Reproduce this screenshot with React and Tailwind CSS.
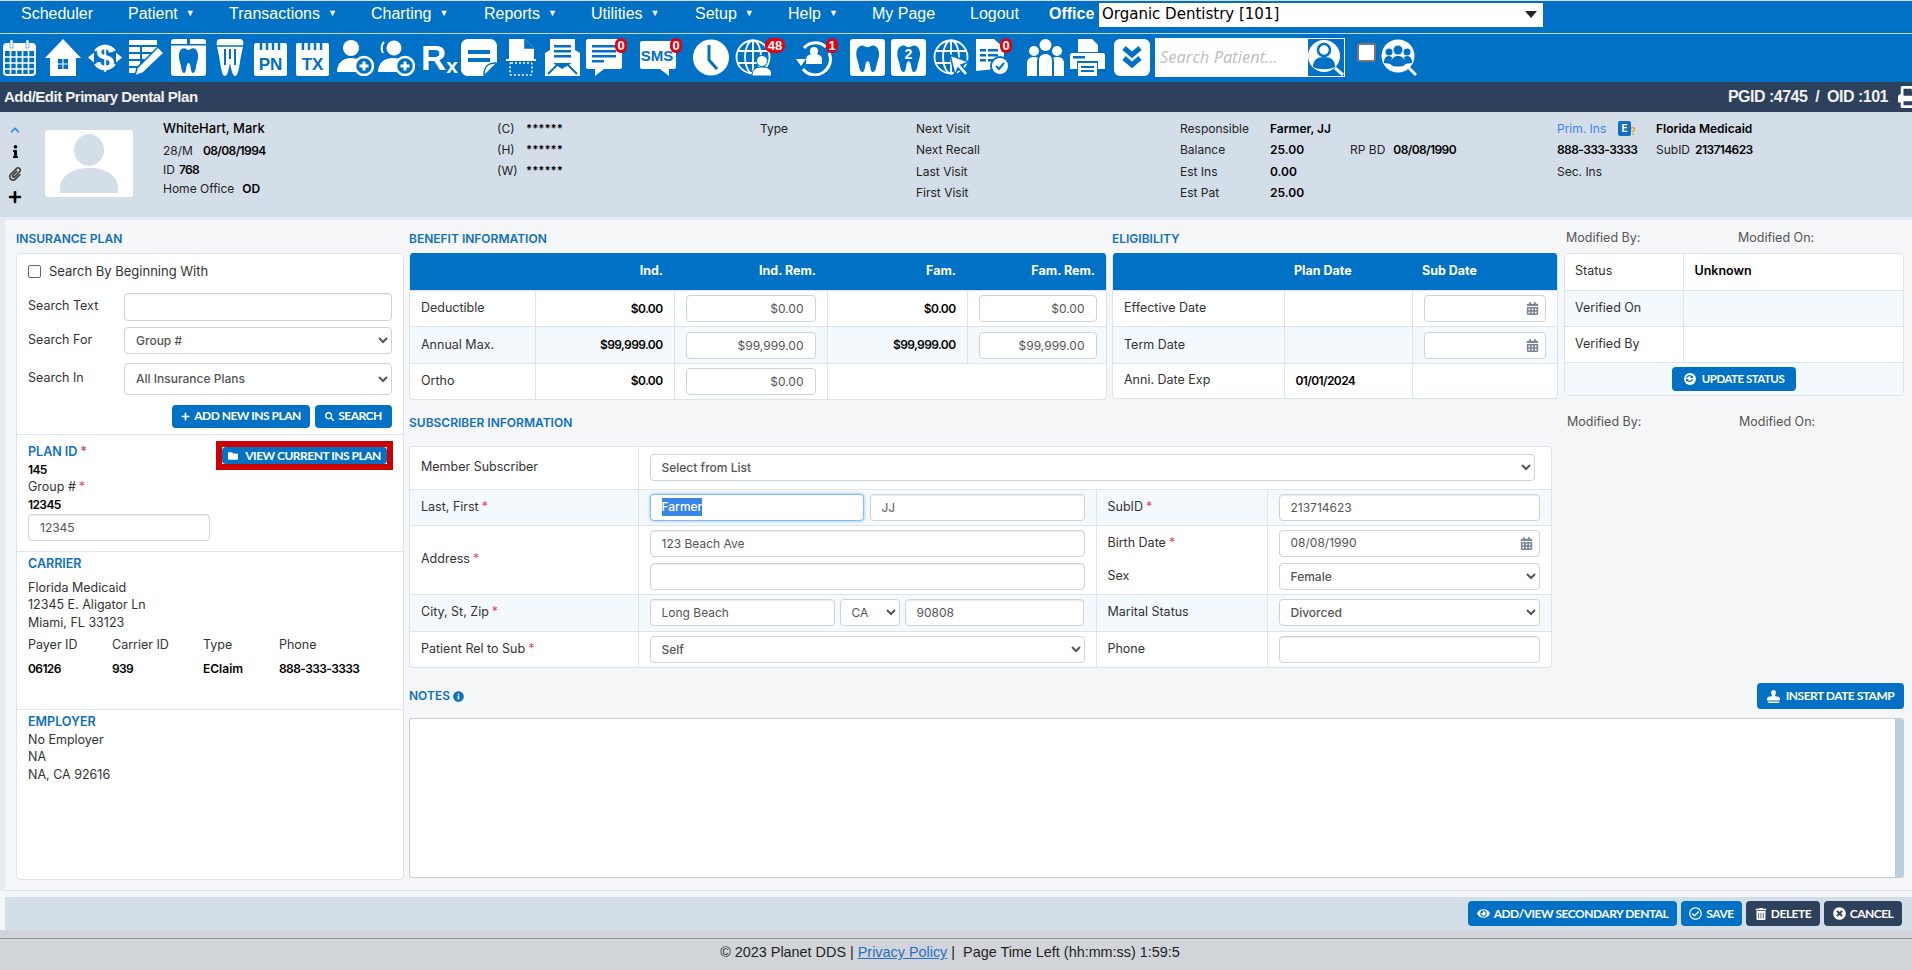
import { FaCalendarAlt, FaChevronUp, FaEye, FaFolder, FaInfo, FaInfoCircle, FaPaperclip, FaPlus, FaRegCheckCircle, FaSearch, FaStamp, FaSyncAlt, FaTimesCircle, FaTrashAlt, FaPrint } from 'react-icons/fa';

const BLUE = '#0071c5';
const toothPath = 'M11 4C6 4 3 8 3 14c0 4 2 7 3 11 1 5 2 9 5 9s3-4 4-8c.5-2 1.500-4 3-4s2.500 2 3 4c1 4 1 8 4 8s4-4 5-9c1-4 3-7 3-11 0-6-3-10-8-10-3 0-4 2-7 2s-4-2-7-2z';

const inputCls = 'h-[27px] w-full rounded-[4px] border border-[#ced2d7] bg-white px-[11px] text-[12px] text-[#555] shadow-[inset_0_1px_1px_rgba(0,0,0,0.08)] outline-none';
const selectCls = 'h-[27px] w-full rounded-[4px] border border-[#ced2d7] bg-white pl-[7px] text-[12px] font-medium text-[#555] outline-none';
const btnCls = 'flex items-center justify-center gap-[4px] rounded-[4px] bg-[#0071c5] font-["Lato"] text-[12px] font-bold uppercase tracking-[-0.5px] text-white';
const heading = 'text-[12px] font-semibold uppercase text-[#0f6fc0]';
const num = 'text-[12px] font-semibold tracking-[-0.6px] text-black';
const td = 'border-l border-t border-[#dde3ea] px-[11px] first:border-l-0';

function Req() {
  return <span className="ml-[3px] align-top text-[#e2445c]">*</span>;
}

function Badge({ n, cls }) {
  return (
    <span className={`absolute top-[-1px] flex h-[15px] items-center justify-center rounded-[7px] bg-[#e3000f] px-[2px] font-["Liberation_Sans"] text-[13px] font-bold leading-none text-white ${cls}`}>
      {n}
    </span>
  );
}

function Svg({ w = 36, cls = '', children }) {
  return (
    <svg viewBox={`0 0 ${w} 37`} width={w} height={37} className={`shrink-0 ${cls}`}>
      {children}
    </svg>
  );
}

function GlobeLines() {
  return (
    <g fill="none" stroke="#fff" strokeWidth="1.800">
      <circle cx="18" cy="18" r="16.500" />
      <ellipse cx="18" cy="18" rx="8" ry="16.500" />
      <path d="M18 1.500v33M2 12h32M2 24h32" />
    </g>
  );
}

function Toolbar() {
  return (
    <div className="flex h-[48px] shrink-0 items-center bg-[#0071c5] pb-[2px] pl-[3px]">
      {/* calendar */}
      <Svg w={33}>
        <rect x="1" y="5" width="31" height="31" rx="3" fill="none" stroke="#fff" strokeWidth="2" />
        <rect x="1" y="5" width="31" height="7" fill="#fff" />
        <rect x="7" y="1" width="3" height="8" fill="#fff" stroke={BLUE} strokeWidth=".5" />
        <rect x="23" y="1" width="3" height="8" fill="#fff" stroke={BLUE} strokeWidth=".5" />
        <path d="M1 18h31M1 24h31M1 30h31M7.500 12v24M13.500 12v24M19.500 12v24M25.500 12v24" stroke="#fff" strokeWidth="1.600" />
      </Svg>
      {/* home */}
      <Svg cls="ml-[9px]">
        <path d="M18 0l18 19h-5v18H5V19H0z" fill="#fff" />
        <path d="M13 20h4.500v4.500H13zM18.500 20H23v4.500h-4.500zM13 25.500h4.500V30H13zM18.500 25.500H23V30h-4.500z" fill={BLUE} />
      </Svg>
      {/* dollar */}
      <Svg w={34} cls="ml-[7px]">
        <path d="M7 12A12 12 0 0 1 27 12M7 25A12 12 0 0 0 27 25" fill="none" stroke="#fff" strokeWidth="2" />
        <path d="M0 18.500l6-5v10zM34 18.500l-6-5v10z" fill="#fff" />
        <text x="17" y="30" textAnchor="middle" fontFamily="Liberation Sans" fontSize="33" fontWeight="700" fill="#fff">$</text>
      </Svg>
      {/* chart edit */}
      <Svg cls="ml-[7px]" w={35}>
        <path d="M0 1h28v5H0zM0 8h11v5H0zM13 8h15v5H13zM0 15h11v5H0zM13 15h8v5h-8zM0 22h11v5H0zM0 29h7v5H0z" fill="#fff" />
        <path d="M29 8l6 6-21 20-8 3 2-8z" fill="#fff" stroke={BLUE} strokeWidth="1.500" />
      </Svg>
      {/* tooth chart */}
      <Svg w={35} cls="ml-[7px]">
        <rect width="35" height="37" rx="3" fill="#fff" />
        <rect x="0" y="5" width="35" height="1.500" fill={BLUE} />
        <rect x="16" y="0" width="3" height="6" fill={BLUE} />
        <g transform="translate(6 6) scale(.64 .82)"><path d={toothPath} fill={BLUE} /></g>
      </Svg>
      {/* bridge */}
      <Svg w={28} cls="ml-[10px]">
        <path d="M4 0h20c3 0 4 3 3 8-1 4-2 8-3 15-1 6-2 14-5 14-2 0-3-4-4-8l-1-5-1 5c-1 4-2 8-4 8-3 0-4-8-5-14C3 16 2 12 1 8 0 3 1 0 4 0z" fill="#fff" />
        <path d="M0 7h28" stroke={BLUE} strokeWidth="1.500" />
        <path d="M9 10v16M14 10v10M19 10v16" stroke={BLUE} strokeWidth="2" />
      </Svg>
      {/* PN */}
      <Svg w={33} cls="ml-[10px]">
        <rect y="4" width="33" height="33" rx="2" fill="#fff" />
        <path d="M7 2v9M13 2v9M19 2v9M25 2v9" stroke={BLUE} strokeWidth="2.500" />
        <text x="16.500" y="31" textAnchor="middle" fontFamily="Liberation Sans" fontSize="17" fontWeight="700" fill={BLUE}>PN</text>
      </Svg>
      {/* TX */}
      <Svg w={33} cls="ml-[9px]">
        <rect y="4" width="33" height="33" rx="2" fill="#fff" />
        <path d="M7 2v9M13 2v9M19 2v9M25 2v9" stroke={BLUE} strokeWidth="2.500" />
        <text x="16.500" y="31" textAnchor="middle" fontFamily="Liberation Sans" fontSize="17" fontWeight="700" fill={BLUE}>TX</text>
      </Svg>
      {/* add patient */}
      <Svg w={37} cls="ml-[8px]">
        <circle cx="14" cy="9" r="8" fill="#fff" />
        <path d="M0 33c0-9 6-14 14-14s12 4 13 7l-8 7z" fill="#fff" />
        <circle cx="27" cy="27" r="9" fill={BLUE} stroke="#fff" strokeWidth="2.500" />
        <path d="M22.500 27h9M27 22.500v9" stroke="#fff" strokeWidth="3" />
      </Svg>
      <Svg w={37} cls="ml-[4px]">
        <circle cx="16" cy="9" r="7.500" fill="#fff" />
        <path d="M6 3C3 6 3 11 5 14" fill="none" stroke="#fff" strokeWidth="2" />
        <path d="M0 33c0-9 6-14 15-14s12 4 13 7l-8 7z" fill="#fff" />
        <circle cx="27" cy="27" r="9" fill={BLUE} stroke="#fff" strokeWidth="2.500" />
        <path d="M22.500 27h9M27 22.500v9" stroke="#fff" strokeWidth="3" />
      </Svg>
      {/* Rx */}
      <div className="ml-[6px] flex h-[37px] w-[36px] shrink-0 items-end font-['Liberation_Sans'] font-bold text-white">
        <span className="text-[35px] leading-[37px]">R</span>
        <span className="text-[21px] leading-[20px]">x</span>
      </div>
      {/* note */}
      <Svg cls="ml-[4px]">
        <path d="M7 0h22c4 0 7 3 7 7v16L22 37H7c-4 0-7-3-7-7V7c0-4 3-7 7-7z" fill="#fff" />
        <path d="M7 11h22v4H7zM7 19h22v4H7z" fill={BLUE} />
        <path d="M23 36c0-8 3-12 12-12" fill="none" stroke={BLUE} strokeWidth="1.500" />
      </Svg>
      {/* scan */}
      <Svg w={30} cls="ml-[9px]">
        <path d="M3 0h16l9 9v11H3z" fill="#fff" />
        <path d="M19 0v9h9" fill={BLUE} stroke={BLUE} strokeWidth="1.500" />
        <path d="M0 21h30" stroke="#fff" strokeWidth="2" />
        <rect x="4" y="24" width="22" height="12" rx="1" fill="none" stroke="#fff" strokeWidth="1.500" strokeDasharray="2 2" />
      </Svg>
      {/* mail */}
      <Svg w={35} cls="ml-[9px]">
        <rect x="5" y="0" width="25" height="24" fill="#fff" />
        <path d="M9 6h17v2.500H9zM9 11h17v2.500H9zM9 16h17v2.500H9z" fill={BLUE} />
        <path d="M0 14l5-3v11l12 8 13-8V11l5 3v23H0z" fill="#fff" />
        <path d="M3 35l10-10M32 35L22 25" stroke={BLUE} strokeWidth="2" />
      </Svg>
      {/* chat */}
      <div className="relative ml-[6px] shrink-0">
        <Svg>
          <path d="M2 0h32c1 0 2 1 2 2v26c0 1-1 2-2 2H18l-9 7v-7H2c-1 0-2-1-2-2V2C0 1 1 0 2 0z" fill="#fff" />
          <path d="M6 6h24v2.500H6zM6 11h24v2.500H6zM6 16h24v2.500H6zM6 21h12v2.500H6z" fill={BLUE} />
        </Svg>
        <Badge n="0" cls="right-[-5px] w-[12px]" />
      </div>
      {/* sms */}
      <div className="relative ml-[18px] shrink-0">
        <Svg>
          <path d="M2 2h32c1 0 2 1 2 2v24c0 1-1 2-2 2h-5v7l-9-7H2c-1 0-2-1-2-2V4c0-1 1-2 2-2z" fill="#fff" />
          <text x="17" y="22" textAnchor="middle" fontFamily="Liberation Sans" fontSize="15" fontWeight="700" fill={BLUE}>SMS</text>
        </Svg>
        <Badge n="0" cls="right-[-6px] w-[12px]" />
      </div>
      {/* clock */}
      <Svg cls="ml-[17px]">
        <circle cx="18" cy="18.500" r="18" fill="#fff" />
        <path d="M16 6v15l8 9" fill="none" stroke={BLUE} strokeWidth="3" />
      </Svg>
      {/* globe user */}
      <div className="relative ml-[6px] shrink-0">
        <Svg>
          <GlobeLines />
          <circle cx="27" cy="22" r="5.500" fill="#fff" stroke={BLUE} />
          <path d="M17 37c0-7 4-9 10-9s10 2 10 9z" fill="#fff" stroke={BLUE} />
        </Svg>
        <Badge n="48" cls="right-[-14px] w-[20px]" />
      </div>
      {/* refresh user */}
      <div className="relative ml-[25px] shrink-0">
        <Svg w={37}>
          <path d="M8 9A15 15 0 0 1 30 8M33 14a15 15 0 0 1-4 18 15 15 0 0 1-22-2" fill="none" stroke="#fff" strokeWidth="3" />
          <path d="M0 20h10l-5 7z" fill="#fff" />
          <circle cx="18" cy="12" r="4" fill="#fff" />
          <path d="M10 25v-5c0-3 3-5 8-5s8 2 8 5v5z" fill="#fff" />
        </Svg>
        <Badge n="1" cls="right-[-5px] w-[12px]" />
      </div>
      {/* tooth */}
      <Svg w={35} cls="ml-[17px]">
        <rect width="35" height="37" rx="3" fill="#fff" />
        <g transform="translate(4 3) scale(.76 .88)"><path d={toothPath} fill={BLUE} /></g>
      </Svg>
      <Svg w={35} cls="ml-[6px]">
        <rect width="35" height="37" rx="3" fill="#fff" />
        <g transform="translate(4 3) scale(.76 .88)"><path d={toothPath} fill={BLUE} /></g>
        <text x="17.500" y="20" textAnchor="middle" fontFamily="Liberation Sans" fontSize="14" fontWeight="700" fill="#fff">2</text>
      </Svg>
      {/* globe cursor */}
      <Svg cls="ml-[7px]">
        <GlobeLines />
        <path d="M17 16l19 7-8 3 7 8-3 3-7-8-3 7z" fill="#fff" stroke={BLUE} strokeWidth="1.500" />
      </Svg>
      {/* doc check */}
      <div className="relative ml-[5px] shrink-0">
        <Svg>
          <path d="M2 0h18l10 9v20L2 32z" fill="#fff" />
          <path d="M6 10h6v2.500H6zM14 10h10v2.500H14zM6 15h6v2.500H6zM14 15h10v2.500H14zM6 20h6v2.500H6zM14 20h5v2.500h-5z" fill={BLUE} />
          <circle cx="26" cy="27" r="9" fill="#fff" stroke={BLUE} strokeWidth="2" />
          <path d="M22 27l3 3 5-6" fill="none" stroke={BLUE} strokeWidth="2" />
        </Svg>
        <Badge n="0" cls="right-[-2px] w-[12px]" />
      </div>
      {/* people */}
      <Svg w={37} cls="ml-[17px]">
        <circle cx="7" cy="12" r="5" fill="#fff" />
        <circle cx="30" cy="12" r="5" fill="#fff" />
        <circle cx="18.500" cy="6" r="6" fill="#fff" />
        <path d="M0 37V24c0-4 3-6 7-6 2 0 3 .5 4 1-1 1-1 3-1 5v13zM37 37V24c0-4-3-6-7-6-2 0-3 .5-4 1 1 1 1 3 1 5v13zM12 37V22c0-5 3-7 6.500-7s6.500 2 6.500 7v15z" fill="#fff" />
      </Svg>
      {/* printer */}
      <Svg w={35} cls="ml-[6px]">
        <path d="M8 0h14l6 6v7H8z" fill="#fff" />
        <path d="M0 16c0-1 1-2 2-2h31c1 0 2 1 2 2v14h-7v-8H7v8H0z" fill="#fff" />
        <rect x="3" y="17" width="12" height="2.500" fill={BLUE} />
        <rect x="8" y="24" width="19" height="13" fill="#fff" />
        <path d="M11 28h13M11 32h13" stroke={BLUE} strokeWidth="2" />
      </Svg>
      {/* chevrons */}
      <Svg cls="ml-[9px]">
        <rect width="36" height="37" rx="6" fill="#fff" />
        <path d="M10 9l8 7 8-7M10 19l8 7 8-7" fill="none" stroke={BLUE} strokeWidth="5" />
      </Svg>
      {/* search */}
      <div className="ml-[5px] flex h-[39px] w-[190px] shrink-0 items-center justify-between bg-white pl-[5px]">
        <span className="font-['Open_Sans'] text-[16.500px] italic text-[#bdbdbd]">Search Patient...</span>
        <div className="mr-[1px] h-[37px] w-[36px] bg-[#0071c5]">
          <svg viewBox="0 0 36 37" width={36} height={37}>
            <circle cx="16" cy="17" r="16" fill="#fff" />
            <circle cx="16" cy="11" r="6" fill="none" stroke={BLUE} strokeWidth="2.500" />
            <path d="M5 28c0-7 4-10 11-10s11 3 11 10c-6 3-16 3-22 0z" fill={BLUE} />
            <path d="M27 29l8 7" stroke="#fff" strokeWidth="3" />
          </svg>
        </div>
      </div>
      <span className="ml-[12px] mb-[10px] h-[19px] w-[19px] shrink-0 rounded-[3px] border-2 border-[#777] bg-white" />
      <Svg cls="ml-[5px]">
        <circle cx="17" cy="17" r="16.500" fill="#fff" />
        <circle cx="8" cy="13" r="3.500" fill={BLUE} />
        <circle cx="26" cy="13" r="3.500" fill={BLUE} />
        <circle cx="17" cy="11" r="4.500" fill={BLUE} />
        <path d="M3 24c0-5 2-7 5-7l3 1-1 7zM31 24c0-5-2-7-5-7l-3 1 1 7zM10 26c0-7 3-9 7-9s7 2 7 9c-4 2-10 2-14 0z" fill={BLUE} />
        <path d="M28 29l7 7" stroke="#fff" strokeWidth="3" />
      </Svg>
    </div>
  );
}

function Nav() {
  const items = [
    ['Scheduler', 'w-[107px]', false],
    ['Patient', 'w-[101px]', true],
    ['Transactions', 'w-[142px]', true],
    ['Charting', 'w-[113px]', true],
    ['Reports', 'w-[107px]', true],
    ['Utilities', 'w-[104px]', true],
    ['Setup', 'w-[93px]', true],
    ['Help', 'w-[84px]', true],
    ['My Page', 'w-[98px]', false],
    ['Logout', 'w-[79px]', false],
  ];
  return (
    <div className="flex h-[34px] shrink-0 items-center border-y border-t-[#d5dbe2] border-b-[#c8d6e5] bg-[#0071c5] pl-[21px] font-['Liberation_Sans'] text-[16px] text-white">
      {items.map(([label, w, caret]) => (
        <div key={label} className={`${w} flex shrink-0 items-center pb-[7px]`}>
          {label}
          {caret && <span className="ml-[8px] text-[9px]">▼</span>}
        </div>
      ))}
      <div className="w-[50px] shrink-0 pb-[7px] font-bold">Office</div>
      <div className="mb-[5px] flex h-[24px] w-[444px] items-center justify-between bg-white pl-[3px] pr-[5px] font-['DejaVu_Sans'] text-[15px] text-black">
        Organic Dentistry [101]
        <span className="mr-[1px] h-0 w-0 border-x-[6px] border-t-[7px] border-x-transparent border-t-[#222]" />
      </div>
    </div>
  );
}

function Row({ label, value, v2, w = 'w-[90px]', tall }) {
  return (
    <div className={`flex h-[21px] items-center ${tall ? 'mt-[1px]' : ''}`}>
      <span className={w}>{label}</span>
      {value && <span className="font-semibold text-black">{value}</span>}
      {v2}
    </div>
  );
}

function PatientBar() {
  return (
    <div className="flex h-[105px] shrink-0 bg-[#d4dee9] pt-[6px] text-[12px] text-[#222]">
      <div className="flex w-[45px] flex-col items-center gap-[7px] pr-[15px] pt-[7px] text-[14px] leading-none">
        <FaChevronUp className="text-[10px] text-[#3b82f6]" />
        <FaInfo className="mt-[3px] text-[13px] text-black" />
        <FaPaperclip className="mt-[2px] text-[#444]" />
        <FaPlus className="mt-[2px] text-[14px] text-black" />
      </div>
      <div className="mt-[12px] h-[67px] w-[88px] shrink-0 overflow-hidden rounded-[3px] bg-white">
        <svg viewBox="0 0 88 67" width={88} height={67}>
          <ellipse cx="44" cy="20" rx="15" ry="16" fill="#d4dee9" />
          <path d="M15 63V58c0-12 12-20 29-20s29 8 29 20v5z" fill="#d4dee9" />
        </svg>
      </div>
      <div className="ml-[30px] w-[334px] shrink-0">
        <div className="flex h-[21px] items-center text-[13px] font-medium text-black">WhiteHart, Mark</div>
        <div className="flex h-[23px] items-center">28/M<span className={`ml-[10px] ${num}`}>08/08/1994</span></div>
        <div className="flex h-[15px] items-center">ID<span className={`ml-[4px] ${num}`}>768</span></div>
        <div className="mt-[1px] flex h-[21px] items-center">Home Office<span className="ml-[8px] font-semibold text-black">OD</span></div>
      </div>
      <div className="w-[263px] shrink-0">
        {['(C)', '(H)', '(W)'].map((l) => (
          <div key={l} className="flex h-[21px] items-center">
            <span className="w-[29px]">{l}</span>
            <span className="text-[11px] font-bold text-black">******</span>
          </div>
        ))}
      </div>
      <div className="flex h-[21px] w-[156px] shrink-0 items-center">Type</div>
      <div className="w-[264px] shrink-0">
        <Row label="Next Visit" />
        <Row label="Next Recall" />
        <Row label="Last Visit" tall />
        <Row label="First Visit" />
      </div>
      <div className="w-[377px] shrink-0">
        <Row label="Responsible" value="Farmer, JJ" />
        <Row label="Balance" value="25.00" v2={<span className="ml-[46px]">RP BD<span className={`ml-[8px] ${num}`}>08/08/1990</span></span>} />
        <Row label="Est Ins" value="0.00" tall />
        <Row label="Est Pat" value="25.00" />
      </div>
      <div className="shrink-0">
        <div className="flex h-[21px] items-center">
          <span className="w-[61px] text-[#3b82f6]">Prim. Ins</span>
          <span className="relative flex h-[15px] w-[13px] items-center justify-center rounded-[2px] bg-[#0f6fc0] text-[10px] font-bold text-white">
            E<span className="absolute bottom-[-3px] right-[-5px] text-[10px] font-bold text-[#f59e0b]">?</span>
          </span>
          <span className="ml-[25px] font-semibold text-black">Florida Medicaid</span>
        </div>
        <div className="flex h-[22px] items-center">
          <span className={`w-[99px] ${num}`}>888-333-3333</span>
          SubID<span className={`ml-[5px] ${num}`}>213714623</span>
        </div>
        <div className="flex h-[21px] items-center">Sec. Ins</div>
      </div>
    </div>
  );
}

function InsurancePlan() {
  return (
    <div className="flex h-[659px] w-[388px] shrink-0 flex-col">
      <div className={`flex h-[32px] items-center pt-[4px] ${heading}`}>Insurance Plan</div>
      <div className="flex h-[627px] flex-col rounded-[4px] border border-[#dde3ea] bg-white">
        <div className="flex h-[181px] shrink-0 flex-col border-b border-[#dde3ea] px-[11px] pt-[8px]">
          <label className="flex items-center gap-[8px] text-[13px]">
            <span className="h-[13px] w-[13px] rounded-[2px] border border-[#666] bg-white" />
            Search By Beginning With
          </label>
          <div className="mt-[11px] flex items-center">
            <span className="w-[96px] shrink-0">Search Text</span>
            <input readOnly className={inputCls + ' !h-[28px]'} />
          </div>
          <div className="mt-[6px] flex items-center">
            <span className="w-[96px] shrink-0">Search For</span>
            <select className={selectCls}><option>Group #</option></select>
          </div>
          <div className="mt-[9px] flex items-center">
            <span className="w-[96px] shrink-0">Search In</span>
            <select className={selectCls + ' !h-[32px]'}><option>All Insurance Plans</option></select>
          </div>
          <div className="mt-[10px] flex justify-end gap-[5px]">
            <button className={`${btnCls} h-[23px] w-[138px]`}><FaPlus className="text-[9px]" /> Add New Ins Plan</button>
            <button className={`${btnCls} h-[23px] w-[77px]`}><FaSearch className="text-[9px]" /> Search</button>
          </div>
        </div>
        <div className="relative h-[117px] shrink-0 border-b border-[#dde3ea] px-[11px] pt-[8px] leading-[17.500px]">
          <div className="font-semibold text-[#0f6fc0]">PLAN ID<Req /></div>
          <div className={num}>145</div>
          <div>Group #<Req /></div>
          <div className={num}>12345</div>
          <input readOnly defaultValue="12345" className={`${inputCls} mt-[1px] !w-[182px]`} />
          <div className="absolute right-[10px] top-[6px] border-[6px] border-[#cc0000]">
            <button className={`${btnCls} h-[17px] w-[165px]`}><FaFolder className="text-[10px]" /> <span className="ml-[3px]">View Current Ins Plan</span></button>
          </div>
        </div>
        <div className="h-[158px] shrink-0 border-b border-[#dde3ea] px-[11px] pt-[3px] leading-[17.500px]">
          <div className="font-semibold text-[#0f6fc0]">CARRIER</div>
          <div className="mt-[6px]">Florida Medicaid</div>
          <div>12345 E. Aligator Ln</div>
          <div>Miami, FL 33123</div>
          <div className="mt-[5px] grid grid-cols-[84px_91px_76px_1fr]">
            <div>Payer ID</div><div>Carrier ID</div><div>Type</div><div>Phone</div>
            <div className={`mt-[6px] ${num}`}>06126</div>
            <div className={`mt-[6px] ${num}`}>939</div>
            <div className="mt-[6px] text-[12px] font-semibold text-black">EClaim</div>
            <div className={`mt-[6px] ${num}`}>888-333-3333</div>
          </div>
        </div>
        <div className="px-[11px] pt-[3px] leading-[17.500px]">
          <div className="font-semibold text-[#0f6fc0]">EMPLOYER</div>
          <div>No Employer</div>
          <div>NA</div>
          <div>NA, CA 92616</div>
        </div>
      </div>
    </div>
  );
}

function DateInput({ value }) {
  return (
    <div className="flex h-[27px] items-center justify-between rounded-[4px] border border-[#ced2d7] bg-white pl-[11px] pr-[6px] text-[12px] text-[#555]">
      <span>{value}</span>
      <FaCalendarAlt className="text-[13px] text-[#7b8794]" />
    </div>
  );
}

function BenefitTables() {
  const money = 'h-[27px] w-[130px] rounded-[4px] border border-[#ced2d7] bg-white px-[11px] text-right text-[12px] text-[#555] outline-none';
  return (
    <div className="flex h-[178px] gap-[5px]">
      <div className="w-[698px] shrink-0">
        <div className={`flex h-[32px] items-center pt-[4px] ${heading}`}>Benefit Information</div>
        <div className="overflow-hidden rounded-[4px] border border-t-0 border-[#dde3ea] bg-white">
          <div className="grid h-[37px] grid-cols-[125px_139px_153px_140px_1fr] items-center bg-[#0071c5] pr-[11px] text-right font-bold text-white">
            <span />
            <span className="pr-[11px]">Ind.</span>
            <span className="pr-[11px]">Ind. Rem.</span>
            <span className="pr-[11px]">Fam.</span>
            <span>Fam. Rem.</span>
          </div>
          <table className="w-full table-fixed border-collapse">
            <colgroup><col className="w-[125px]" /><col className="w-[139px]" /><col className="w-[153px]" /><col className="w-[140px]" /><col /></colgroup>
            <tbody>
              {[['Deductible', '$0.00', 'h-[36px]', 'bg-white'], ['Annual Max.', '$99,999.00', 'h-[37px]', 'bg-[#f4f9fd]']].map(([l, v, h, bg]) => (
                <tr key={l} className={`${h} ${bg}`}>
                  <td className={td}>{l}</td>
                  <td className={`${td} text-right ${num}`}>{v}</td>
                  <td className={td}><input readOnly defaultValue={v} className={money} /></td>
                  <td className={`${td} text-right ${num}`}>{v}</td>
                  <td className={td}><input readOnly defaultValue={v} className="h-[27px] w-[118px] rounded-[4px] border border-[#ced2d7] bg-white px-[11px] text-right text-[12px] text-[#555] outline-none" /></td>
                </tr>
              ))}
              <tr className="h-[35px]">
                <td className={td}>Ortho</td>
                <td className={`${td} text-right ${num}`}>$0.00</td>
                <td className={td}><input readOnly defaultValue="$0.00" className={money} /></td>
                <td className={td} colSpan={2} />
              </tr>
            </tbody>
          </table>
        </div>
      </div>
      <div className="w-[446px] shrink-0">
        <div className={`flex h-[32px] items-center pt-[4px] ${heading}`}>Eligibility</div>
        <div className="overflow-hidden rounded-[4px] border border-t-0 border-[#dde3ea] bg-white">
          <div className="grid h-[37px] grid-cols-[171px_128px_1fr] items-center bg-[#0071c5] font-bold text-white">
            <span />
            <span className="pl-[10px]">Plan Date</span>
            <span className="pl-[10px]">Sub Date</span>
          </div>
          <table className="w-full table-fixed border-collapse">
            <colgroup><col className="w-[171px]" /><col className="w-[128px]" /><col /></colgroup>
            <tbody>
              <tr className="h-[36px]">
                <td className={td}>Effective Date</td><td className={td} />
                <td className={td}><DateInput /></td>
              </tr>
              <tr className="h-[37px] bg-[#f4f9fd]">
                <td className={td}>Term Date</td><td className={td} />
                <td className={td}><DateInput /></td>
              </tr>
              <tr className="h-[34px]">
                <td className={td}>Anni. Date Exp</td>
                <td className={`${td} ${num}`}>01/01/2024</td>
                <td className={td} />
              </tr>
            </tbody>
          </table>
        </div>
      </div>
      <div className="ml-[1px] w-[340px] shrink-0">
        <div className="flex h-[32px] items-center pt-[3px] text-[#555]">
          <span className="ml-[2px] w-[172px]">Modified By:</span>Modified On:
        </div>
        <div className="overflow-hidden rounded-[4px] border border-[#dde3ea] bg-white">
          <table className="w-full table-fixed border-collapse">
            <colgroup><col className="w-[118px]" /><col /></colgroup>
            <tbody>
              <tr className="h-[36px]"><td className="border-l-0 px-[10px]">Status</td><td className="border-l border-[#dde3ea] px-[11px] font-semibold text-black">Unknown</td></tr>
              <tr className="h-[36px] bg-[#f4f9fd]"><td className="border-t border-[#dde3ea] px-[10px]">Verified On</td><td className="border-l border-t border-[#dde3ea]" /></tr>
              <tr className="h-[36px]"><td className="border-t border-[#dde3ea] px-[10px]">Verified By</td><td className="border-l border-t border-[#dde3ea]" /></tr>
              <tr className="h-[33px] bg-[#f4f9fd]">
                <td colSpan={2} className="border-t border-[#dde3ea]">
                  <button className={`${btnCls} mx-auto h-[24px] w-[124px]`}>
                    <span className="flex h-[12px] w-[12px] items-center justify-center rounded-full bg-white"><FaSyncAlt className="text-[7px] text-[#0071c5]" /></span>
                    <span className="ml-[2px] text-[11.500px]">Update Status</span>
                  </button>
                </td>
              </tr>
            </tbody>
          </table>
        </div>
      </div>
    </div>
  );
}

function SubscriberTable() {
  const tdr = 'border-l border-t border-[#dde3ea] px-[11px]';
  const lbl = 'border-t border-[#dde3ea] px-[11px]';
  return (
    <div className="w-[1143px] overflow-hidden rounded-[4px] border border-[#dde3ea] bg-white">
      <table className="w-full table-fixed border-collapse">
        <colgroup><col className="w-[228px]" /><col className="w-[458px]" /><col className="w-[171px]" /><col /></colgroup>
        <tbody>
          <tr className="h-[42px]">
            <td className="px-[11px]">Member Subscriber</td>
            <td colSpan={3} className="border-l border-[#dde3ea] pl-[11px] pr-[16px]">
              <select className={selectCls + ' !pl-[7px]'}><option>Select from List</option></select>
            </td>
          </tr>
          <tr className="h-[36px] bg-[#f4f9fd]">
            <td className={lbl}>Last, First<Req /></td>
            <td className={tdr}>
              <div className="flex gap-[6px]">
                <div className="flex h-[27px] w-[214px] items-center rounded-[4px] border border-[#80bdff] bg-white pl-[11px] text-[12px] shadow-[0_0_3px_rgba(0,113,197,0.5)]">
                  <span className="bg-[#3a86e6] font-medium text-white">Farmer</span>
                </div>
                <input readOnly defaultValue="JJ" className={inputCls + ' !w-[215px]'} />
              </div>
            </td>
            <td className={tdr}>SubID<Req /></td>
            <td className={tdr}><input readOnly defaultValue="213714623" className={inputCls} /></td>
          </tr>
          <tr className="h-[69px]">
            <td className={lbl}>Address<Req /></td>
            <td className={tdr}>
              <input readOnly defaultValue="123 Beach Ave" className={inputCls} />
              <input readOnly className={`${inputCls} mt-[6px]`} />
            </td>
            <td className={tdr}>
              <div className="flex h-[27px] items-center">Birth Date<Req /></div>
              <div className="mt-[6px] flex h-[27px] items-center">Sex</div>
            </td>
            <td className={tdr}>
              <DateInput value="08/08/1990" />
              <select className={`${selectCls} mt-[6px] !pl-[7px]`}><option>Female</option></select>
            </td>
          </tr>
          <tr className="h-[37px] bg-[#f4f9fd]">
            <td className={lbl}>City, St, Zip<Req /></td>
            <td className={tdr}>
              <div className="flex gap-[5px]">
                <input readOnly defaultValue="Long Beach" className={inputCls + ' !w-[185px]'} />
                <select className={selectCls + ' !w-[60px] shrink-0 !font-normal'}><option>CA</option></select>
                <input readOnly defaultValue="90808" className={inputCls + ' !w-[179px]'} />
              </div>
            </td>
            <td className={tdr}>Marital Status</td>
            <td className={tdr}><select className={selectCls}><option>Divorced</option></select></td>
          </tr>
          <tr className="h-[36px]">
            <td className={lbl}>Patient Rel to Sub<Req /></td>
            <td className={tdr}><select className={selectCls}><option>Self</option></select></td>
            <td className={tdr}>Phone</td>
            <td className={tdr}><input readOnly className={inputCls} /></td>
          </tr>
        </tbody>
      </table>
    </div>
  );
}

export default function App() {
  return (
    <div className="flex h-[970px] w-[1912px] flex-col overflow-hidden bg-[#d1d5d9] font-['Inter','Noto_Sans',sans-serif] text-[12.500px] text-[#333]">
      <Nav />
      <Toolbar />
      <div className="flex h-[30px] shrink-0 items-center justify-between bg-[#2d405c] pl-[4px] font-['Liberation_Sans'] text-[15px] font-bold tracking-[-0.5px] text-[#f1f1f1]">
        Add/Edit Primary Dental Plan
        <div className="flex items-center text-[16px]">
          PGID :4745 &nbsp;/&nbsp; OID :101
          <FaPrint className="ml-[10px] mr-[-8px] text-[22px] text-white" />
        </div>
      </div>
      <PatientBar />
      {/* main form */}
      <div className="shrink-0 bg-[#e6ebf1] pl-[5px] pt-[3px]">
        <div className="flex h-[671px] gap-[5px] border-b border-[#dde1e6] bg-[#f5f6f8] pl-[11px] pt-[1px]">
          <InsurancePlan />
          <div className="w-[1495px] shrink-0">
            <BenefitTables />
            <div className="flex h-[47px] items-center">
              <span className={`w-[1158px] ${heading}`}>Subscriber Information</span>
              <span className="w-[172px] text-[#555]">Modified By:</span>
              <span className="text-[#555]">Modified On:</span>
            </div>
            <SubscriberTable />
            <div className="mt-[15px] flex h-[26px] items-center justify-between">
              <span className={`flex items-center gap-[3px] ${heading}`}>Notes <FaInfoCircle className="text-[11px]" /></span>
              <button className={`${btnCls} h-[26px] w-[147px]`}><FaStamp className="text-[13px]" /><span className="ml-[2px]">Insert Date Stamp</span></button>
            </div>
            <div className="mt-[9px] flex h-[160px] overflow-hidden rounded-[3px] border-t border-b border-l border-[#c8ccd0] bg-white">
              <div className="flex-1" />
              <div className="w-[9px] bg-[#b9d0e0]" />
            </div>
          </div>
        </div>
      </div>
      {/* actions */}
      <div className="shrink-0 bg-[#f5f6f8] pl-[5px] pt-[6px]">
        <div className="flex h-[33px] items-center justify-end gap-[4px] bg-[#d4dee9] pr-[10px]">
          <button className={`${btnCls} h-[25px] w-[209px]`}><FaEye className="text-[13px]" /> Add/View Secondary Dental</button>
          <button className={`${btnCls} h-[25px] w-[61px]`}><FaRegCheckCircle className="text-[13px]" /> Save</button>
          <button className={`${btnCls} h-[25px] w-[74px] !bg-[#2d405c]`}><FaTrashAlt className="text-[12px]" /> Delete</button>
          <button className={`${btnCls} h-[25px] w-[78px] !bg-[#2d405c]`}><FaTimesCircle className="text-[13px]" /> Cancel</button>
        </div>
      </div>
      <div className="mt-[8px] flex flex-1 items-center justify-center border-t border-[#8c9094] pb-[3px] pr-[12px] font-['Liberation_Sans'] text-[14.400px] text-[#222]">
        © 2023 Planet DDS |&nbsp;<a className="text-[#2a6fc0] underline">Privacy Policy</a>&nbsp;|&nbsp; Page Time Left (hh:mm:ss) 1:59:5
      </div>
    </div>
  );
}
